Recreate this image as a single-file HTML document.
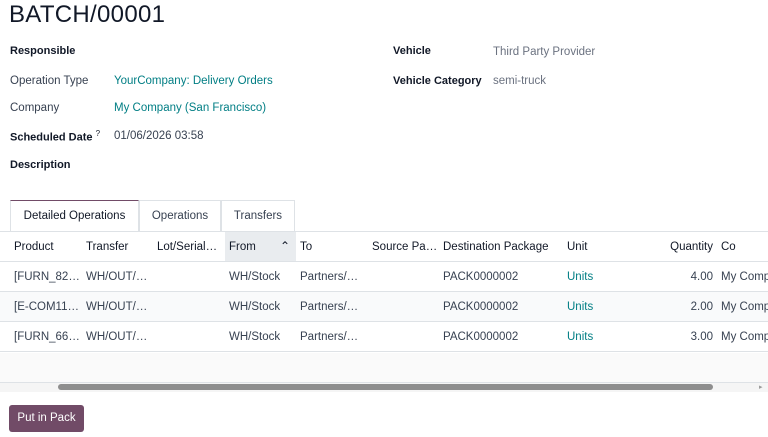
<!DOCTYPE html>
<html><head><style>
*{box-sizing:border-box;margin:0;padding:0}
body{width:768px;height:437px;overflow:hidden;background:#fff;font-family:"Liberation Sans",sans-serif;font-size:11.5px;color:#374151;position:relative}
.a{position:absolute;white-space:nowrap}
h1{position:absolute;left:9px;top:1px;font-size:24px;font-weight:normal;color:#111827;letter-spacing:0.3px}
.lb{font-weight:bold;color:#111827;font-size:11px}
.ln{color:#017e84}
.g{color:#6b7280}
.tab{position:absolute;top:200px;height:32px;border:1px solid #dee2e6;border-bottom:none;padding-top:9px;text-align:center;color:#374151}
table{position:absolute;left:0;top:231px;border-collapse:collapse;width:820px;table-layout:fixed}
td,th{height:30px;padding:0 0 0 4px;text-align:left;white-space:nowrap;overflow:hidden;border-bottom:1px solid #dee2e6;font-weight:normal}
th{color:#111827;border-top:1px solid #dee2e6}
.r{text-align:right;padding-right:6px}
</style></head><body>
<h1>BATCH/00001</h1>
<div class="a lb" style="left:10px;top:45px">Responsible</div>
<div class="a" style="left:10px;top:75px">Operation Type</div>
<div class="a ln" style="left:114px;top:75px">YourCompany: Delivery Orders</div>
<div class="a" style="left:10px;top:102px">Company</div>
<div class="a ln" style="left:114px;top:102px">My Company (San Francisco)</div>
<div class="a lb" style="left:10px;top:129px">Scheduled Date <sup style="font-size:8px;font-weight:normal">?</sup></div>
<div class="a" style="left:114px;top:130px">01/06/2026 03:58</div>
<div class="a lb" style="left:10px;top:159px">Description</div>
<div class="a lb" style="left:393px;top:45px">Vehicle</div>
<div class="a g" style="left:493px;top:46px">Third Party Provider</div>
<div class="a lb" style="left:393px;top:75px">Vehicle Category</div>
<div class="a g" style="left:493px;top:75px">semi-truck</div>
<div class="tab" style="left:10px;width:129px;border-top:1px solid #714b67;color:#111827">Detailed Operations</div>
<div class="tab" style="left:139px;width:82px">Operations</div>
<div class="tab" style="left:221px;width:74px">Transfers</div>
<table>
<colgroup><col style="width:82px"><col style="width:71px"><col style="width:72px"><col style="width:71px"><col style="width:72px"><col style="width:71px"><col style="width:124px"><col style="width:77px"><col style="width:79px"><col style="width:101px"></colgroup>
<tr><th style="padding-left:14px">Product</th><th>Transfer</th><th>Lot/Serial…</th><th style="background:#e9ecef;position:relative">From<span style="position:absolute;right:6px;top:7px;font-size:12px">⌃</span></th><th>To</th><th>Source Pa…</th><th>Destination Package</th><th>Unit</th><th class="r">Quantity</th><th style="padding-left:2px">Co</th></tr>
<tr><td style="padding-left:14px">[FURN_82…</td><td>WH/OUT/…</td><td></td><td>WH/Stock</td><td>Partners/…</td><td></td><td>PACK0000002</td><td class="ln">Units</td><td class="r">4.00</td><td style="padding-left:2px">My Comp</td></tr>
<tr style="background:#f9fafb"><td style="padding-left:14px">[E-COM11…</td><td>WH/OUT/…</td><td></td><td>WH/Stock</td><td>Partners/…</td><td></td><td>PACK0000002</td><td class="ln">Units</td><td class="r">2.00</td><td style="padding-left:2px">My Comp</td></tr>
<tr><td style="padding-left:14px">[FURN_66…</td><td>WH/OUT/…</td><td></td><td>WH/Stock</td><td>Partners/…</td><td></td><td>PACK0000002</td><td class="ln">Units</td><td class="r">3.00</td><td style="padding-left:2px">My Comp</td></tr>
</table>
<div class="a" style="left:0;top:353px;width:768px;height:30px;background:#fafafa;border-bottom:1px solid #dee2e6"></div>
<div class="a" style="left:0;top:383px;width:768px;height:9px;background:#f5f5f5"></div>
<div class="a" style="left:58px;top:384px;width:655px;height:6px;background:#8e8e8e;border-radius:3px"></div>
<div class="a" style="left:759px;top:383px;font-size:7px;color:#999">▸</div>
<div class="a" style="left:9px;top:405px;width:75px;height:27px;background:#714b67;color:#fff;border-radius:3px;text-align:center;padding-top:7px">Put in Pack</div>
</body></html>
